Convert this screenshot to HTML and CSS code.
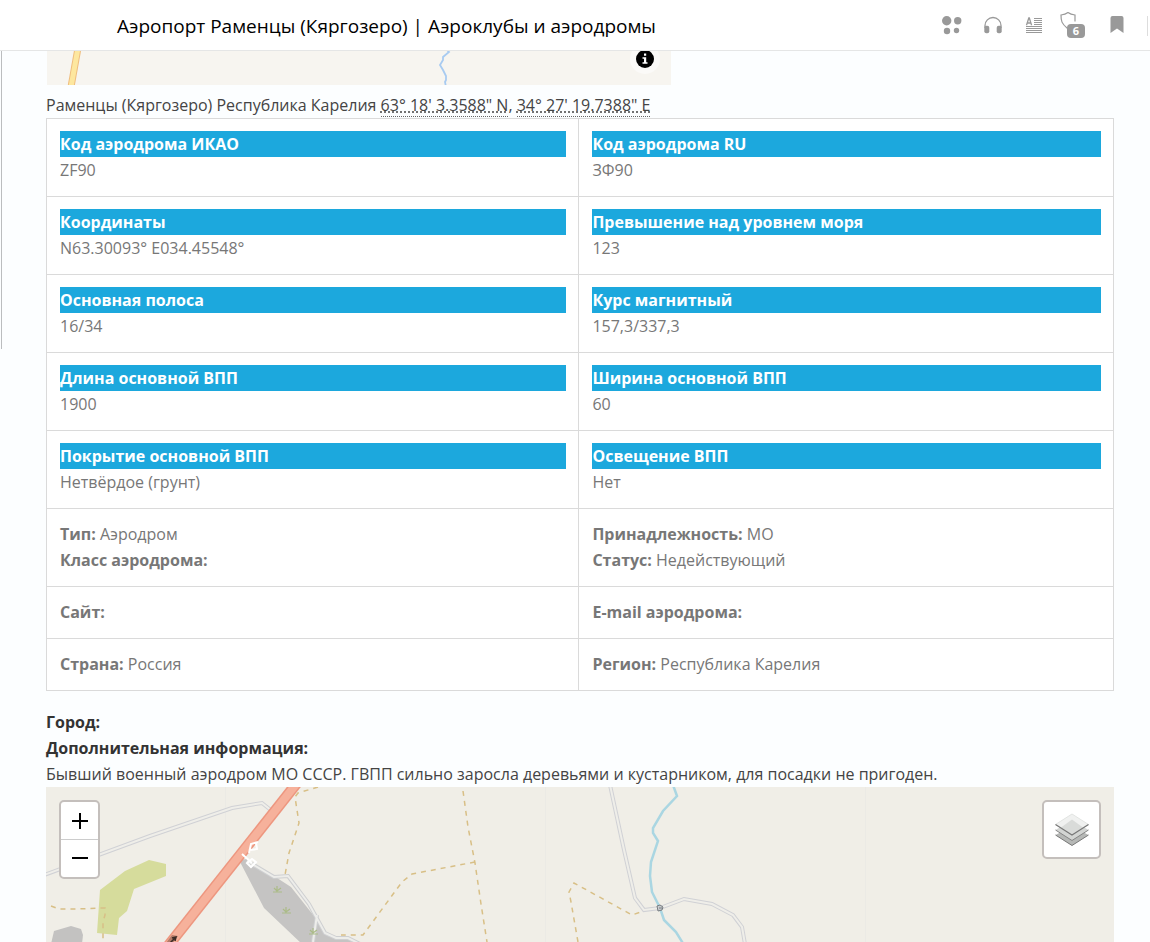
FILE: index.html
```html
<!DOCTYPE html>
<html lang="ru">
<head>
<meta charset="utf-8">
<title>Аэропорт Раменцы (Кяргозеро) | Аэроклубы и аэродромы</title>
<link rel="stylesheet" href="styles.css">
</head>
<body>
<header class="topbar">
  <h1 class="topbar-title">Аэропорт Раменцы (Кяргозеро) | Аэроклубы и аэродромы</h1>
  <div class="tools">
    <button class="tool" type="button" aria-label="Сервисы"><svg width="20" height="20" viewBox="0 0 20 20" fill="#999"><circle cx="4.7" cy="4.7" r="4.7"/><circle cx="15.7" cy="4.7" r="3.7"/><circle cx="5" cy="15" r="3.2"/><circle cx="14.5" cy="14.5" r="2.7"/></svg></button>
    <button class="tool" type="button" aria-label="Аудио"><svg width="20" height="20" viewBox="0 0 20 20"><path d="M2 12V9.5a8 8 0 0 1 16 0V12" fill="none" stroke="#999" stroke-width="1.3"/><rect x="1.3" y="9.8" width="5" height="7.4" rx="2" fill="#999"/><rect x="13.7" y="9.8" width="5" height="7.4" rx="2" fill="#999"/></svg></button>
    <button class="tool" type="button" aria-label="Режим чтения"><svg width="20" height="20" viewBox="0 0 20 20" fill="none" stroke="#999"><path d="M10 2.5h8M10 4.500h8M10 6.500h8M10 8.500h8M2 10.500h16M2 12.500h16M2 14.500h16M2 16.500h16"/><path d="M2.500 9.200 4.800 2h.5l2.300 7.200M3.300 7h3.500" stroke-width="1.300"/></svg></button>
    <button class="tool tool-shield" type="button" aria-label="Защита: 6"><svg width="28" height="28" viewBox="0 0 28 28"><path d="M10 .5c2 1.500 4.500 2.200 7 2.500v6.500M10 .5C8 2 5.500 2.700 3 3c0 6 .5 8.500 6.500 13.500" fill="none" stroke="#999" stroke-width="1.200"/></svg><span class="tool-count">6</span></button>
    <button class="tool" type="button" aria-label="Закладка"><svg width="20" height="20" viewBox="0 0 20 20"><path d="M3.500 2a2 2 0 0 1 2-2h9a2 2 0 0 1 2 2v15L10 12.500 3.500 17z" fill="#999"/></svg></button>
  </div>
</header>
<span class="side-line"></span>
<main class="content">
  <div class="place-map">
    <svg width="624" height="34" viewBox="47 51 624 34" fill="none"><path d="M78 48 71 87" stroke="#efbd7d" stroke-width="7"/><path d="M78 48 71 87" stroke="#fde79f" stroke-width="5"/><path d="m447 50 2 2-6 5v3l-3 5 3 5 3 6v4l-1 2 1 5" stroke="#a8cbf1" stroke-width="1.800"/></svg>
    <button class="info" type="button" aria-label="О карте"><svg width="18" height="18" viewBox="0 0 18 18"><circle cx="9" cy="9" r="9"/><path d="M8 3.500h2.200v2.200H8zM6.500 7.300h3.700v4.900h1.300v1.500h-5v-1.500H8V8.800H6.500z" fill="#fff"/></svg></button>
  </div>
  <p class="location">Раменцы (Кяргозеро) Республика Карелия <abbr title="63.30093">63° 18' 3.3588" N</abbr>, <abbr title="34.45548">34° 27' 19.7388" E</abbr></p>
  <table class="facts">
    <tbody>
      <tr><td><strong class="band">Код аэродрома ИКАО</strong>ZF90</td><td><strong class="band">Код аэродрома RU</strong>ЗФ90</td></tr>
      <tr><td><strong class="band">Координаты</strong>N63.30093° E034.45548°</td><td><strong class="band">Превышение над уровнем моря</strong>123</td></tr>
      <tr><td><strong class="band">Основная полоса</strong>16/34</td><td><strong class="band">Курс магнитный</strong>157,3/337,3</td></tr>
      <tr><td><strong class="band">Длина основной ВПП</strong>1900</td><td><strong class="band">Ширина основной ВПП</strong>60</td></tr>
      <tr><td><strong class="band">Покрытие основной ВПП</strong>Нетвёрдое (грунт)</td><td><strong class="band">Освещение ВПП</strong>Нет</td></tr>
      <tr><td><strong>Тип:</strong> Аэродром<br><strong>Класс аэродрома:</strong></td><td><strong>Принадлежность:</strong> МО<br><strong>Статус:</strong> Недействующий</td></tr>
      <tr><td><strong>Сайт:</strong></td><td><strong>E-mail аэродрома:</strong></td></tr>
      <tr><td><strong>Страна:</strong> Россия</td><td><strong>Регион:</strong> Республика Карелия</td></tr>
    </tbody>
  </table>
  <p class="notes"><strong>Город:</strong><br><strong>Дополнительная информация:</strong><br>Бывший военный аэродром МО СССР. ГВПП сильно заросла деревьями и кустарником, для посадки не пригоден.</p>
  <section class="area-map" aria-label="Карта">
    <svg class="area-drawing" viewBox="46 787 1068 155" preserveAspectRatio="xMidYMin slice" fill="none">
      <path d="M225.500 787v155M545.500 787v155M865.500 787v155" stroke="#ebeae5"/>
      <g stroke="#d0d1d5" stroke-width="4"><path d="M44 875 150 836 232 808 262 803 272 811"/><path d="M610 785 624 850 635 898 644 910 660 908 684 899 712 904 733 915 742 927 745 944"/></g>
      <g stroke="#efeee9" stroke-width="2"><path d="M44 875 150 836 232 808 262 803 272 811"/><path d="M610 785 624 850 635 898 644 910 660 908 684 899 712 904 733 915 742 927 745 944"/></g>
      <path d="m100 890 25-19 24-11 17 4v12l-32 13-7 22-8 7-2 17-20-2z" fill="#d6dc9c"/>
      <path d="m54 931 17-5 10 3 2 6-1 9H51z" fill="#c3c2c1"/>
      <path d="m239 860 8-1 27 17 17 11 19 24 13 16 4 9 18 1 11 8h-53l-39-37z" fill="#c5c4c3"/>
      <path d="m247 861 27 16 14-1 21 28 16 29 11 5h12l16 8M317 915l-4 27" stroke="#cecfd1" stroke-width="4"/>
      <path d="m247 861 27 16 14-1 21 28 16 29 11 5h12l16 8M317 915l-4 27" stroke="#ededea" stroke-width="2"/>
      <path d="M297 783 168 946" stroke="#ed967f" stroke-width="11"/><path d="M297 783 168 946" stroke="#f6b19b" stroke-width="8"/>
      <path d="m242 854 10 9M249 853l2-9 7-2M256 843l1 6-7 1M247 863l5-4 4 3-5 5z" stroke="#fff" stroke-width="2"/>
      <path d="m166 943 6-8 6 1-6 8z" fill="#b47b68"/><path d="m170 943 6-6m-4 1 4-1-1 4" stroke="#3b2b25" stroke-width="1.500"/>
      <g stroke="#d8bf86" stroke-width="1.500" stroke-dasharray="5 5"><path d="m318 787-20 6-3 4 4 26-10 30-4 22M51 906l8 3h18l23-1h5v7l-2 7v21"/><path d="m463 791 5 36 7 36 6 41 6 38M475 862l-63 12-10 8-39 53h-22M578 942l-7-40-2-10 5-9 58 32 12-4"/></g>
      <g stroke="#abbb87" stroke-width="1.200"><path d="M273 892h9m-5-6v6m-3-4 3 3 4-3M282 913h9m-5-6v6m-3-4 3 3 4-3M309 934h9m-5-6v6m-3-4 3 3 4-3"/></g>
      <path d="m673 785 4 11-14 15-10 17v5l5 8-7 21-1 14 2 16 8 16 4 12 12 12 8 13" stroke="#aad6e2" stroke-width="2.500"/>
      <path d="m657 906 3-1 3 2-1 3-4 1zM659 908h3" fill="#c9cdd0" stroke="#777c80"/>
    </svg>
    <div class="map-controls">
      <div class="zoom"><button type="button" aria-label="Приблизить"><svg width="16" height="16" viewBox="0 0 16 16"><path d="M0 7h16v2H0zM7 0h2v16H7z"/></svg></button><button type="button" aria-label="Отдалить"><svg width="16" height="16" viewBox="0 0 16 16"><path d="M0 7h16v2H0z"/></svg></button></div>
      <button class="layers" type="button" aria-label="Слои"><svg width="35" height="34" viewBox="-1 0 35 34"><path d="M.5 22 17 13l16.500 9L17 32.500z" fill="#b6b8b6"/><path d="M.5 22 17 32.500 33.500 22" fill="none" stroke="#777"/><path d="M.5 17 17 7l16.500 10L17 27.500z" fill="#d3d5d3"/><path d="M.5 17 17 27.500 33.500 17" fill="none" stroke="#858585"/><path d="M.5 11.500 17 1l16.500 10.500L17 22z" fill="#f0f1f0" stroke="#e2e4e2"/><path d="m6 14.500 11-8 11 8L17 22z" fill="#d9dbd9"/><path d="M.5 11.500 17 22l16.500-10.500" fill="none" stroke="#777" stroke-width="1.200"/></svg></button>
    </div>
  </section>
</main>
</body>
</html>
```
FILE: styles.css
```css
* { box-sizing: border-box; }
body {
  display: flex;
  flex-direction: column;
  min-height: 100vh;
  margin: 0;
  background: #fcfeff;
  color: #444;
  font: 16px/26px "Open Sans", "Noto Sans", sans-serif;
}
button { padding: 0; border: 0; background: none; font: inherit; cursor: pointer; }
svg { display: block; }
p { margin: 0; }

.topbar {
  display: flex;
  align-items: center;
  justify-content: space-between;
  height: 51px;
  padding: 2px 2px 0 117px;
  border-bottom: 1px solid #e5e6e6;
  background: #fff;
}
.topbar-title { margin: 0; color: #000; font-size: 19px; font-weight: 400; white-space: nowrap; }
.tools {
  display: flex;
  align-items: center;
  gap: 21px;
  height: 20px;
  padding-right: 20px;
  border-right: 1px solid #ddd;
}
.tool { flex: none; }
.tool-shield { position: relative; width: 28px; height: 28px; margin-left: -7px; }
.tool-count {
  position: absolute;
  right: 1px;
  bottom: 2px;
  width: 18px;
  height: 14px;
  border-radius: 4px;
  background: #999;
  color: #fff;
  font-size: 11px;
  font-weight: 700;
  line-height: 14px;
}
.side-line { position: absolute; top: 51px; left: 1px; width: 1px; height: 298px; background: #bbbdbf; }

.content { display: flex; flex: 1; flex-direction: column; padding: 0 36px 0 46px; }
.place-map { position: relative; width: 624px; height: 34px; margin: 0 0 7px 1px; overflow: hidden; background: #f7f5f0; }
.info {
  position: absolute;
  top: -7px;
  right: 11px;
  display: grid;
  place-items: center;
  width: 30px;
  height: 30px;
  border-radius: 50%;
  background: #fbfaf8;
}
abbr { border-bottom: 1px dotted #666; text-decoration: underline dotted; }

.facts {
  width: 100%;
  border-collapse: collapse;
  table-layout: fixed;
  background: #fff;
  color: #777;
}
.facts td { padding: 12px 12px 13px 13px; border: 1px solid #dadada; vertical-align: top; }
.facts td:first-child { width: 49.9%; }
.band { display: block; background: #1ca8dd; color: #fff; }
.notes { margin-top: 18px; }
.notes strong { color: #333; }

.area-map { position: relative; flex: 1; min-height: 155px; overflow: hidden; background: #f0eee7; }
.area-drawing { position: absolute; inset: 0; width: 100%; height: 100%; }
.map-controls { position: relative; display: flex; align-items: flex-start; justify-content: space-between; padding: 13px; }
.zoom, .layers { border: 2px solid #c4bfbc; border-radius: 5px; background: #fff; }
.zoom { display: flex; flex-direction: column; width: 41px; }
.zoom button { display: grid; place-items: center; height: 37px; }
.zoom button + button { height: 38px; padding-bottom: 2px; border-top: 1px solid #ccc; }
.layers { display: grid; place-items: center; width: 59px; height: 59px; }
```
